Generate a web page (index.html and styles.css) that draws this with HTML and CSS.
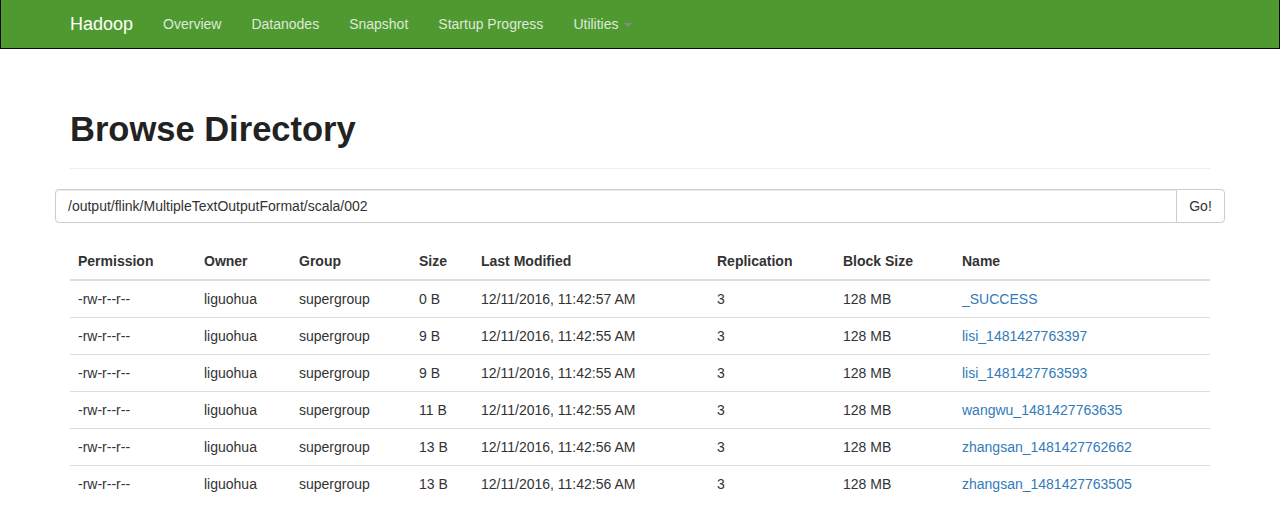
FILE: index.html
```html
<!DOCTYPE html>
<html>
<head>
<meta charset="utf-8">
<title>Browsing HDFS</title>
<link rel="stylesheet" href="styles.css">
</head>
<body>
<header class="navbar">
  <div class="container nav-inner">
    <a class="brand" href="#">Hadoop</a>
    <ul class="nav">
      <li><a href="#">Overview</a></li>
      <li><a href="#">Datanodes</a></li>
      <li><a href="#">Snapshot</a></li>
      <li><a href="#">Startup Progress</a></li>
      <li><a href="#">Utilities <span class="caret"></span></a></li>
    </ul>
  </div>
</header>

<main class="container">
  <div class="page-header">
    <h1>Browse Directory</h1>
  </div>

  <div class="row">
    <form class="input-group">
      <input class="form-control" type="text" value="/output/flink/MultipleTextOutputFormat/scala/002">
      <button class="btn" type="button">Go!</button>
    </form>
  </div>

  <table class="table">
    <colgroup>
      <col class="c-perm"><col class="c-owner"><col class="c-group"><col class="c-size">
      <col class="c-mod"><col class="c-rep"><col class="c-block"><col class="c-name">
    </colgroup>
    <thead>
      <tr>
        <th>Permission</th><th>Owner</th><th>Group</th><th>Size</th>
        <th>Last Modified</th><th>Replication</th><th>Block Size</th><th>Name</th>
      </tr>
    </thead>
    <tbody>
      <tr><td>-rw-r--r--</td><td>liguohua</td><td>supergroup</td><td>0 B</td><td>12/11/2016, 11:42:57 AM</td><td>3</td><td>128 MB</td><td><a href="#">_SUCCESS</a></td></tr>
      <tr><td>-rw-r--r--</td><td>liguohua</td><td>supergroup</td><td>9 B</td><td>12/11/2016, 11:42:55 AM</td><td>3</td><td>128 MB</td><td><a href="#">lisi_1481427763397</a></td></tr>
      <tr><td>-rw-r--r--</td><td>liguohua</td><td>supergroup</td><td>9 B</td><td>12/11/2016, 11:42:55 AM</td><td>3</td><td>128 MB</td><td><a href="#">lisi_1481427763593</a></td></tr>
      <tr><td>-rw-r--r--</td><td>liguohua</td><td>supergroup</td><td>11 B</td><td>12/11/2016, 11:42:55 AM</td><td>3</td><td>128 MB</td><td><a href="#">wangwu_1481427763635</a></td></tr>
      <tr><td>-rw-r--r--</td><td>liguohua</td><td>supergroup</td><td>13 B</td><td>12/11/2016, 11:42:56 AM</td><td>3</td><td>128 MB</td><td><a href="#">zhangsan_1481427762662</a></td></tr>
      <tr><td>-rw-r--r--</td><td>liguohua</td><td>supergroup</td><td>13 B</td><td>12/11/2016, 11:42:56 AM</td><td>3</td><td>128 MB</td><td><a href="#">zhangsan_1481427763505</a></td></tr>
    </tbody>
  </table>
</main>
</body>
</html>
```

FILE: styles.css
```css
* { box-sizing: border-box; }
html { overflow: hidden; }
body {
  margin: 0;
  font-family: "Liberation Sans", Arial, Helvetica, sans-serif;
  font-size: 14px;
  line-height: 20px;
  color: #333;
  background: #fff;
}
a { color: #337ab7; text-decoration: none; }

.container {
  width: 1170px;
  margin: 0 auto;
  padding: 0 15px;
}

.navbar {
  background: #4f9a30;
  border: 1px solid #0b0b0b;
  border-top: none;
  height: 49px;
  margin-bottom: 0;
}
.nav-inner { display: flex; align-items: center; height: 48px; }
.brand {
  color: #fff;
  font-size: 18px;
  line-height: 20px;
  padding: 14px 15px 14px 15px;
  margin-left: -15px;
}
.nav { display: flex; list-style: none; margin: 0; padding: 0; }
.nav a {
  display: block;
  color: #dfe8da;
  padding: 14px 15px;
  line-height: 20px;
}
.caret {
  display: inline-block;
  width: 0; height: 0;
  margin-left: 2px;
  vertical-align: middle;
  border-top: 4px solid #8a8a8a;
  border-left: 4px solid transparent;
  border-right: 4px solid transparent;
}

.page-header {
  margin: 60px 0 20px;
  padding-bottom: 9px;
  border-bottom: 1px solid #eee;
}
.page-header h1 {
  margin: 0 0 10px;
  font-size: 34.5px;
  line-height: 40px;
  font-weight: 700;
  color: #222;
}

.row { margin: 0 -15px; }
.input-group { display: flex; height: 34px; margin: 0; }
.form-control {
  flex: 1;
  height: 34px;
  padding: 6px 12px;
  font: inherit;
  color: #333;
  border: 1px solid #ccc;
  border-radius: 4px 0 0 4px;
  box-shadow: inset 0 1px 1px rgba(0,0,0,.075);
  outline: none;
}
.btn {
  width: 49px;
  height: 34px;
  margin-left: -1px;
  font: inherit;
  color: #333;
  background: #fff;
  border: 1px solid #ccc;
  border-radius: 0 4px 4px 0;
  padding: 6px 12px;
}

.table {
  width: 100%;
  margin-top: 20px;
  border-collapse: collapse;
  border-spacing: 0;
}
.c-perm { width: 126px; }
.c-owner { width: 95px; }
.c-group { width: 120px; }
.c-size { width: 62px; }
.c-mod { width: 236px; }
.c-rep { width: 126px; }
.c-block { width: 119px; }
.c-name { width: 256px; }
.table th, .table td {
  padding: 8px;
  text-align: left;
  line-height: 20px;
  vertical-align: top;
}
.table th {
  font-weight: 700;
  border-bottom: 2px solid #ddd;
}
.table td { border-top: 1px solid #ddd; }
```
